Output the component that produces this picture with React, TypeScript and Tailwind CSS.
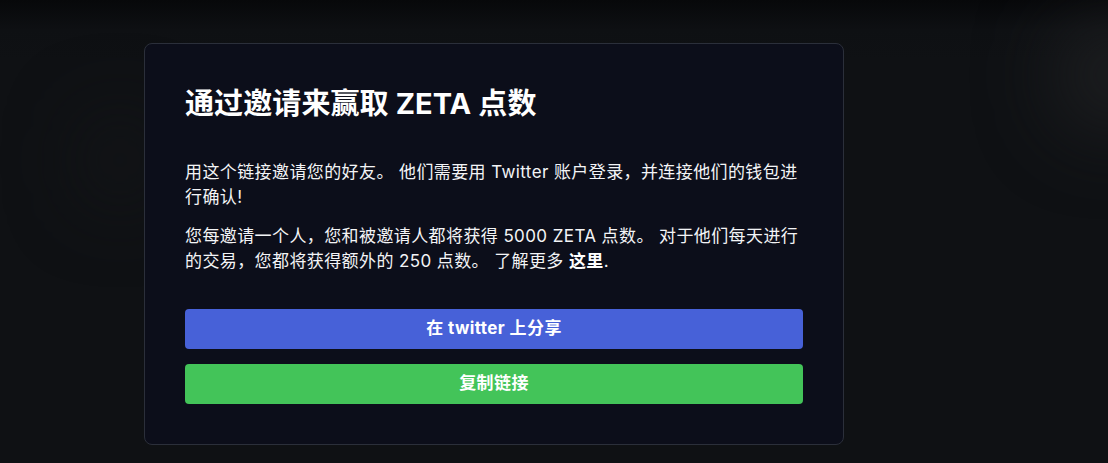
import React from 'react';

const font = { fontFamily: '"Inter", "Noto Sans CJK SC", sans-serif' };

export default function App() {
  return (
    <div
      className="relative h-[463px] w-[1108px] overflow-hidden bg-[#0f1114] bg-gradient-to-b from-[#07080a] via-[#0e1013] to-[#0f1114] bg-[length:100%_60px] bg-no-repeat"
      style={font}
    >
      {/* blurred backdrop blobs */}
      <div className="absolute right-[-60px] top-[20px] h-[110px] w-[110px] rounded-full bg-[#1f2022] blur-2xl" />
      <div className="absolute left-[90px] top-[120px] h-[80px] w-[60px] rounded-full bg-[#151619] blur-2xl" />

      <div className="relative pl-[144px] pt-[43px]">
        <div className="w-[700px] rounded-lg border border-[#2b2f3a] bg-[#0c0e1a] p-10">
          <h2 className="text-[29px] font-bold leading-[40px] tracking-[0.1px] text-white">通过邀请来赢取 ZETA 点数</h2>

          <div className="mt-[36px] text-[17px] leading-[25px] tracking-[0.4px] text-[#f3f4f6]">
            <p>
              用这个链接邀请您的好友。 他们需要用 Twitter 账户登录，并连接他们的钱包进行确认!
            </p>
            <p className="mt-[14px]">
              您每邀请一个人，您和被邀请人都将获得 5000 ZETA 点数。 对于他们每天进行的交易，您都将获得额外的 250 点数。 了解更多{' '}
              <span className="font-bold text-white">这里</span>.
            </p>
          </div>

          <div className="mt-[35px] flex flex-col gap-[15px]">
            <button className="h-10 w-full rounded bg-[#4761d8] text-[17px] font-bold tracking-[0.4px] text-white">
              在 twitter 上分享
            </button>
            <button className="h-10 w-full rounded bg-[#43c459] text-[17px] font-bold tracking-[0.4px] text-white">
              复制链接
            </button>
          </div>
        </div>
      </div>
    </div>
  );
}
